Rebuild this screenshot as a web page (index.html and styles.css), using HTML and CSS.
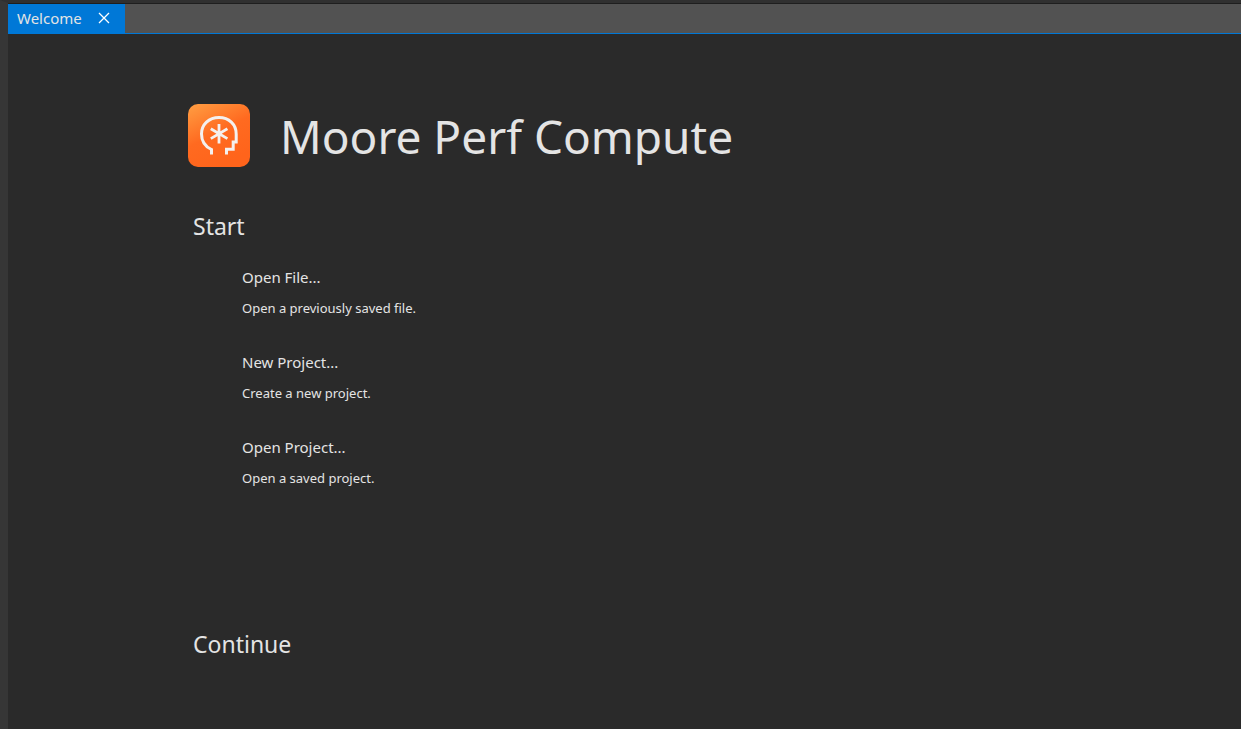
FILE: index.html
```html
<!DOCTYPE html>
<html lang="en">
<head>
    <meta charset="UTF-8">
    <meta name="viewport" content="width=device-width, initial-scale=1.0">
    <title>Moore Perf Compute</title>
    <link rel="stylesheet" href="styles.css">
</head>
<body>
<div class="tab-bar">
    <div class="tab">
        <span>Welcome</span>
        <button type="button" class="tab-close" aria-label="Close">
            <svg width="12" height="12" viewBox="0 0 12 12">
                <path d="M1 1L11 11M11 1L1 11" stroke="#fff" stroke-width="1.3"/>
            </svg>
        </button>
    </div>
</div>

<main class="page">
    <header class="brand">
        <svg class="logo" width="62" height="64" viewBox="0 0 62 64">
            <defs>
                <linearGradient id="orange" x1="0" y1="0" x2="0.5" y2="1">
                    <stop offset="0" stop-color="#ff9f43"/>
                    <stop offset="0.55" stop-color="#ff6a20"/>
                    <stop offset="1" stop-color="#ff641b"/>
                </linearGradient>
            </defs>
            <rect y="0" width="62" height="63" rx="10" fill="url(#orange)"/>
            <g fill="none" stroke="#f4f0ee">
                <path d="M23.5 50.500V45.500C17 42.500 13.500 37 13.500 30C13.500 20.500 21 13.500 31 13.500C41 13.500 48.200 20.500 48.200 30V38H45.200V45.200H38.500V50.500" stroke-width="3"/>
                <path d="M31 20V39.500M22.800 24.800L39.400 34.600M39.400 24.800L22.800 34.600" stroke-width="2.800"/>
            </g>
        </svg>
        <h1>Moore Perf Compute</h1>
    </header>

    <section class="start">
        <h2>Start</h2>
        <ul class="actions">
            <li>
                <a href="#">Open File...</a>
                <p>Open a previously saved file.</p>
            </li>
            <li>
                <a href="#">New Project...</a>
                <p>Create a new project.</p>
            </li>
            <li>
                <a href="#">Open Project...</a>
                <p>Open a saved project.</p>
            </li>
        </ul>
    </section>

    <section class="continue">
        <h2>Continue</h2>
    </section>
</main>
</body>
</html>
```
FILE: styles.css
```css
* {
    box-sizing: border-box;
}
body {
    margin: 0;
    min-height: 100vh;
    display: flex;
    flex-direction: column;
    font-family: "Noto Sans", "Open Sans", sans-serif;
    color: #e4e4e4;
    background: #2a2a2a;
    border-top: 3px solid #303030;
    border-left: 8px solid #363636;
}
.tab-bar {
    display: flex;
    height: 31px;
    background: #525252;
    border-top: 1px solid #1e1e1e;
    border-bottom: 1px solid #0078d7;
}
.tab {
    display: flex;
    align-items: center;
    gap: 16px;
    padding: 0 15px 2px 9px;
    background: #0078d7;
    font-size: 15px;
}
.tab-close {
    display: flex;
    padding: 0;
    border: none;
    background: none;
    cursor: pointer;
}
.page {
    flex: 1;
    padding: 70px 24px 24px 180px;
}
.brand {
    display: flex;
    align-items: center;
    gap: 30px;
}
h1, h2 {
    margin: 0;
    font-weight: 400;
}
h1 {
    font-size: 46px;
    line-height: 64px;
}
h2 {
    padding-left: 5px;
    font-size: 23px;
    line-height: 32px;
}
.start {
    margin-top: 42px;
}
.actions {
    margin: 0;
    padding: 25px 0 0 54px;
    list-style: none;
}
.actions li {
    height: 85px;
}
.actions a {
    display: block;
    font-size: 15px;
    line-height: 20px;
    color: inherit;
    text-decoration: none;
}
.actions a:hover {
    text-decoration: underline;
}
.actions p {
    margin: 11px 0 0;
    font-size: 13px;
    line-height: 20px;
}
.continue {
    margin-top: 106px;
}
```
